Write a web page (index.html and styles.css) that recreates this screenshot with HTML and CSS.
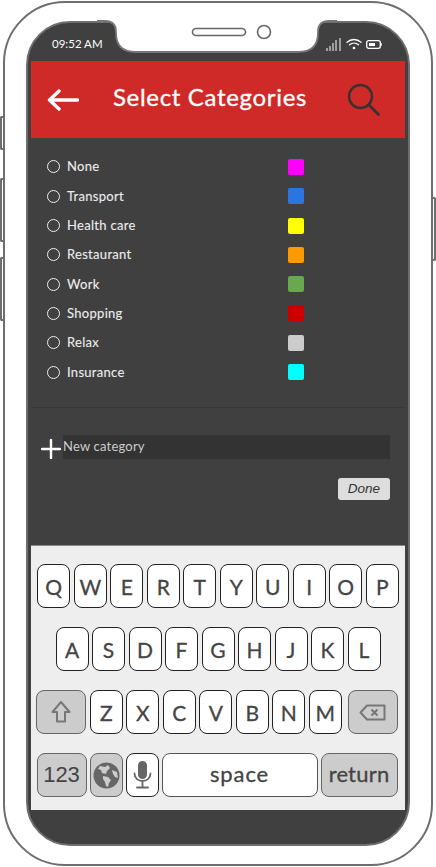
FILE: index.html
```html
<!DOCTYPE html>
<html lang="en">
<head>
<meta charset="utf-8">
<title>Select Categories</title>
<link rel="stylesheet" href="styles.css">
</head>
<body>
<div class="device">
  <span class="side side-a"></span><span class="side side-b"></span><span class="side side-c"></span><span class="side side-d"></span>
  <div class="phone">
    <div class="screen">
      <div class="status">
        <span class="time">09:52 AM</span>
        <div class="status-icons">
          <svg width="16" height="14" viewBox="0 0 16 14"><g stroke="#ddd" stroke-width="1.2"><path d="M1 14v-3M4 14V9M7 14V6M10 14V3M14 14V1"/></g></svg>
          <svg width="16" height="12" viewBox="0 0 16 12" fill="none" stroke="#fff" stroke-width="1.3" stroke-linecap="round"><path d="M1 4.2C5 .6 11 .6 15 4.2M3.5 6.8c2.6-2.2 6.4-2.2 9 0"/><circle cx="8" cy="10" r=".7" fill="#fff"/></svg>
          <svg width="16" height="9" viewBox="0 0 16 9"><rect x=".7" y=".7" width="13.6" height="7.6" rx="2" fill="none" stroke="#fff" stroke-width="1.3"/><rect x="3" y="3" width="6" height="3" fill="#fff"/><path d="M15.2 3v3" stroke="#fff"/></svg>
        </div>
      </div>
      <header class="appbar">
        <svg class="back" width="32" height="24" viewBox="0 0 32 24" fill="none" stroke="#fff" stroke-width="3.4" stroke-linecap="round" stroke-linejoin="round"><path d="M30.5 12H3M12 3l-9.500 9L12 21"/></svg>
        <h1 class="title">Select Categories</h1>
        <svg class="search" width="33" height="33" viewBox="0 0 33 33" fill="none" stroke="#333" stroke-width="2.400" stroke-linecap="round"><circle cx="13.500" cy="13.500" r="11.500"/><path d="M22 22l9.500 9.500" stroke-width="2.800"/></svg>
      </header>
      <main class="content">
        <ul class="cats">
          <li class="cat"><span class="radio"></span><span class="cat-name">None</span><span class="swatch c-none"></span></li>
          <li class="cat"><span class="radio"></span><span class="cat-name">Transport</span><span class="swatch c-transport"></span></li>
          <li class="cat"><span class="radio"></span><span class="cat-name">Health care</span><span class="swatch c-health"></span></li>
          <li class="cat"><span class="radio"></span><span class="cat-name">Restaurant</span><span class="swatch c-restaurant"></span></li>
          <li class="cat"><span class="radio"></span><span class="cat-name">Work</span><span class="swatch c-work"></span></li>
          <li class="cat"><span class="radio"></span><span class="cat-name">Shopping</span><span class="swatch c-shopping"></span></li>
          <li class="cat"><span class="radio"></span><span class="cat-name">Relax</span><span class="swatch c-relax"></span></li>
          <li class="cat"><span class="radio"></span><span class="cat-name">Insurance</span><span class="swatch c-insurance"></span></li>
        </ul>
        <div class="divider"></div>
        <div class="new-row">
          <svg class="plus" width="20" height="20" viewBox="0 0 20 20" stroke="#fff" stroke-width="2.400" stroke-linecap="round"><path d="M10 1v18M1 10h18"/></svg>
          <div class="new-input">New category</div>
        </div>
        <div class="done-row"><button class="done">Done</button></div>
      </main>
      <section class="keyboard">
        <div class="krow">
          <span class="key">Q</span><span class="key">W</span><span class="key">E</span><span class="key">R</span><span class="key">T</span><span class="key">Y</span><span class="key">U</span><span class="key">I</span><span class="key">O</span><span class="key">P</span>
        </div>
        <div class="krow">
          <span class="key">A</span><span class="key">S</span><span class="key">D</span><span class="key">F</span><span class="key">G</span><span class="key">H</span><span class="key">J</span><span class="key">K</span><span class="key">L</span>
        </div>
        <div class="krow">
          <span class="key fn wide"><svg width="20" height="24" viewBox="0 0 20 24" fill="none" stroke="#777" stroke-width="2" stroke-linejoin="round"><path d="M10 2 1.500 12H6v9.500h8V12h4.500z"/></svg></span>
          <span class="key">Z</span><span class="key">X</span><span class="key">C</span><span class="key">V</span><span class="key">B</span><span class="key">N</span><span class="key">M</span>
          <span class="key fn wide del"><svg width="27" height="17" viewBox="0 0 27 17" fill="none" stroke="#777" stroke-width="2" stroke-linejoin="round"><path d="M8 1.500h17.500v14H8L1.500 8.500z"/><path d="M12.500 5.500l6 6M18.500 5.500l-6 6"/></svg></span>
        </div>
        <div class="krow bottom">
          <span class="key fn wide sym">123</span>
          <span class="key fn"><svg width="27" height="27" viewBox="0 0 27 27"><circle cx="13.500" cy="13.500" r="13" fill="#666"/><path d="M7 4l5 1 3-2 2 3-3 3-1 3-4-1-1-3-3-1zM10 14l5 1 3 3-2 3-1 4-2-1-1-4-2-3zM19 8l5 2 1 6-3-1-2-3z" fill="#ccc"/></svg></span>
          <span class="key"><svg width="19" height="28" viewBox="0 0 19 28" fill="none"><rect x="5" y="0" width="9" height="18" rx="4.500" fill="#666"/><path d="M1.500 12.500c0 10 16 10 16 0M9.500 20.500V26M4 26.500h11" stroke="#666" stroke-width="1.800" stroke-linecap="round"/></svg></span>
          <span class="key space">space</span>
          <span class="key fn ret">return</span>
        </div>
      </section>
    </div>
    <svg class="notch" width="240" height="36" viewBox="0 0 240 36">
      <path d="M0 0H240V4H232Q221 4 221 15V16Q221 35 201 35H39Q19 35 19 16V15Q19 4 8 4H0Z" fill="#fff"/>
      <path d="M0 4H8Q19 4 19 15V16Q19 35 39 35H201Q221 35 221 16V15Q221 4 232 4H240" fill="none" stroke="#777" stroke-width="1.800"/>
      <rect x="95.500" y="11.500" width="53" height="7" rx="3.500" fill="#fff" stroke="#666" stroke-width="1.600"/>
      <circle cx="167" cy="15" r="6.500" fill="#fff" stroke="#666" stroke-width="1.600"/>
    </svg>
  </div>
</div>
</body>
</html>
```
FILE: styles.css
```css
* { box-sizing: border-box; }
html, body { margin: 0; padding: 0; background: #fff; }
body { width: 436px; height: 867px; overflow: hidden; font-family: Lato, "Open Sans", sans-serif; }
.device { position: relative; width: 436px; height: 867px; padding: 1px 3px; }
.phone { position: relative; width: 430px; height: 865px; padding: 18px 21px 18px 21px; border: 2px solid #6e6e6e; border-radius: 62px; background: #fff; }
.side { position: absolute; width: 4px; border: 2px solid #6e6e6e; background: #fff; }
.side-a { left: 0; top: 116px; height: 34px; border-right: 0; border-radius: 2px 0 0 2px; }
.side-b { left: 0; top: 178px; height: 64px; border-right: 0; border-radius: 2px 0 0 2px; }
.side-c { left: 0; top: 257px; height: 64px; border-right: 0; border-radius: 2px 0 0 2px; }
.side-d { right: 0; top: 197px; height: 64px; border-left: 0; border-radius: 0 2px 2px 0; }
.screen { width: 384px; height: 825px; border: 2px solid #6e6e6e; border-radius: 44px; background: #404040; overflow: hidden; display: flex; flex-direction: column; }
.status { height: 38px; flex: none; display: flex; justify-content: space-between; align-items: flex-end; padding: 0 26px 10px 24px; }
.time { color: #fff; font-size: 11.500px; line-height: 14px; }
.status-icons { display: flex; align-items: center; gap: 4px; }
.appbar { flex: none; height: 77px; margin: 0 3px; background: #cf2a27; display: flex; align-items: center; padding-left: 16px; }
.back { flex: none; }
.title { margin: 0 0 6px 34px; color: #fff; font-size: 24px; font-weight: 400; letter-spacing: .67px; white-space: nowrap; -webkit-text-stroke: .3px #fff; }
.search { flex: none; margin-left: auto; margin-right: 25px; }
.content { flex: 1; margin: 0 3px; }
.cats { list-style: none; margin: 14.300px 0 0; padding: 0 0 0 16px; }
.cat { height: 29.300px; display: flex; align-items: center; color: #eee; font-size: 13px; letter-spacing: .3px; -webkit-text-stroke: .1px #eee; }
.radio { width: 13px; height: 13px; border: 1.500px solid #eee; border-radius: 50%; flex: none; }
.cat-name { margin-left: 7px; margin-bottom: 1px; width: 221px; flex: none; }
.swatch { width: 16px; height: 16px; border-radius: 2px; flex: none; }
.c-none { background: #ff00ff; }
.c-transport { background: #2a75e0; }
.c-health { background: #ffff00; }
.c-restaurant { background: #ff9900; }
.c-work { background: #6aa84f; }
.c-shopping { background: #cc0000; }
.c-relax { background: #cccccc; }
.c-insurance { background: #00ffff; }
.divider { height: 1px; margin-top: 20.300px; background: #383838; }
.new-row { display: flex; align-items: flex-end; margin: 27px 15px 0 10px; }
.plus { flex: none; margin-right: 2px; }
.new-input { flex: 1; height: 24px; line-height: 23px; background: #333; color: #ccc; font-size: 13px; letter-spacing: .2px; }
.done-row { display: flex; justify-content: flex-end; margin: 19px 15px 0 0; }
.done { width: 52px; height: 22px; padding: 0; border: 0; border-radius: 3px; background: #ddd; color: #333; font: italic 13.500px "Liberation Sans", Arial, sans-serif; }
.keyboard { flex: none; height: 265px; margin: 0 3px 34px; background: #eee; border-top: 1px solid #888; padding-top: 18px; display: flex; flex-direction: column; gap: 19px; }
.krow { display: flex; justify-content: center; gap: 3.500px; height: 44px; }
.bottom { gap: 3px; }
.key { width: 33px; height: 44px; flex: none; display: flex; align-items: center; justify-content: center; background: #fff; border: 1.500px solid #222; border-radius: 8px; color: #444; font-size: 21px; -webkit-text-stroke: .3px #444; }
.fn { background: #ccc; border-color: #666; }
.wide { width: 50px; }
.del { margin-left: 2.500px; margin-right: 2px; }
.sym { font: 22px "Liberation Sans", Arial, sans-serif; -webkit-text-stroke: 0; }
.space { width: 156px; border-color: #555; font-size: 22px; letter-spacing: .9px; padding-bottom: 4px; }
.ret { width: 77px; margin-right: 2px; font-size: 22px; letter-spacing: .2px; padding-bottom: 4px; }
.notch { position: absolute; left: 92px; top: 14px; }
```
